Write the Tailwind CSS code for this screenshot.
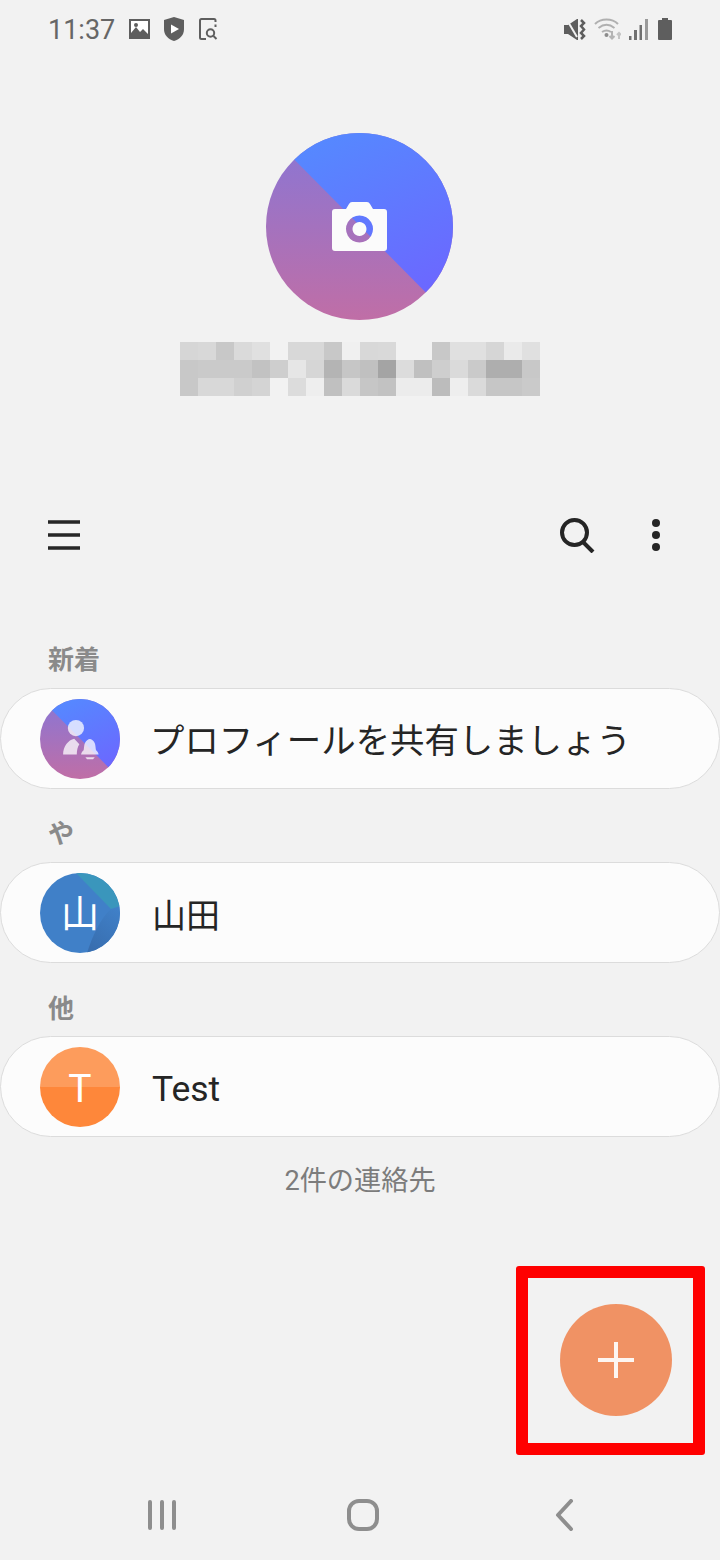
<!DOCTYPE html>
<html lang="ja">
<head>
  <meta charset="UTF-8" />
  <meta name="viewport" content="width=device-width, initial-scale=1.0"/>
  <title>連絡先</title>
  <script src="https://cdn.jsdelivr.net/npm/@tailwindcss/browser@4"></script>
</head>
<body class="bg-[#f2f2f2] text-[#252525] font-['Roboto','Noto_Sans_CJK_JP',sans-serif]">
  <div class="relative w-[720px] h-[1560px] flex flex-col overflow-hidden">

    <!-- status bar -->
    <div class="h-[60px] flex items-start justify-between pl-[48px] pr-[48px] pt-[17px]">
      <div class="flex items-center h-[24px]">
        <span class="w-[81px] mt-[2px] text-[27px] leading-[24px] text-[#666]">11:37</span>
        <svg width="21" height="20" viewBox="0 0 21 20"><path fill="#5e5e5e" d="M0 0h21v20H0z"/><path fill="#fff" d="M2 2h17v13l-5-5-3 3-4-5-5 6z"/><circle cx="7" cy="6" r="2" fill="#5e5e5e"/></svg>
        <svg class="ml-[14px]" width="20" height="24" viewBox="0 0 20 24"><path fill="#5e5e5e" d="M10 0l10 3v9c0 6-4 10-10 12C4 22 0 18 0 12V3z"/><path fill="#fff" d="M7 7.500l8 4.500-8 4.500z"/></svg>
        <svg class="ml-[15px]" width="19" height="22" viewBox="0 0 19 22" fill="none" stroke="#5e5e5e" stroke-width="2"><path d="M7 21H2.500A1.500 1.500 0 0 1 1 19.500v-17A1.500 1.500 0 0 1 2.500 1H15a1.500 1.500 0 0 1 1.500 1.500V4M16.500 6.500V9"/><circle cx="11.500" cy="15" r="3.700"/><path d="M14.500 18l3 3"/></svg>
      </div>
      <div class="flex items-center h-[24px]">
        <svg width="22" height="21" viewBox="0 0 22 21"><path fill="#5e5e5e" d="M0 6h4l9-6h1v21h-1l-9-6H0z"/><path stroke="#f2f2f2" stroke-width="2" d="M3 1l10 17"/><path fill="none" stroke="#5e5e5e" stroke-width="2.500" d="M17 1l3 3-3 3 3 3.500-3 3.500 3 3-3 3"/></svg>
        <svg class="ml-[8px]" width="27" height="22" viewBox="0 0 27 22" fill="none" stroke="#b0b0b0" stroke-width="2"><path d="M1 6c6-6 17-6 23 0M4.500 10c5-4 11-4 16 0M8 14c3-2 6-2 9 0"/><circle cx="12.500" cy="17" r="2" fill="#8c8c8c" stroke="none"/><path stroke="#b4b4b4" d="M18 13v7M15.500 18l2.500 2.500 2.500-2.500"/><path stroke="#c4c4c4" d="M25 21v-6M23 17l2-2 2 2"/></svg>
        <svg class="ml-[8px]" width="19" height="21" viewBox="0 0 19 21" fill="#707070"><path d="M0 17h2.500v4H0zM5 11h3v10H5zM10.500 6h2.500v15h-2.500z"/><path fill="#9a9a9a" d="M16 0h3v21h-3z"/></svg>
        <svg class="ml-[10px]" width="14" height="22" viewBox="0 0 14 22"><path fill="#5e5e5e" d="M4 0h6v2h3a1 1 0 0 1 1 1v18a1 1 0 0 1-1 1H1a1 1 0 0 1-1-1V3a1 1 0 0 1 1-1h3z"/></svg>
      </div>
    </div>

    <!-- profile -->
    <div class="flex flex-col items-center pt-[73px]">
      <svg class="self-start ml-[266px]" width="187" height="187" viewBox="0 0 187 187">
        <defs>
          <clipPath id="bigClip"><circle cx="93.500" cy="93.500" r="93.500"/></clipPath>
          <linearGradient id="bigBlue" x1="0.300" y1="0" x2="0.800" y2="1"><stop offset="0" stop-color="#5589ff"/><stop offset="1" stop-color="#6e64ff"/></linearGradient>
          <linearGradient id="bigPurple" x1="0" y1="0" x2="0" y2="1"><stop offset="0" stop-color="#8876d6"/><stop offset="1" stop-color="#c06ea6"/></linearGradient>
        </defs>
        <g clip-path="url(#bigClip)">
          <rect width="187" height="187" fill="url(#bigPurple)"/>
          <path d="M2 0H187V187Z" fill="url(#bigBlue)"/>
        </g>
        <path fill="#fbfbfb" fill-rule="evenodd" d="M69 76h11l3-5q1-2 3-2h15q2 0 3 2l3 5h11q3 0 3 3v36q0 3-3 3H69q-3 0-3-3V79q0-3 3-3zM93.500 82.500a13.500 13.500 0 1 0 0.010 0zM93.500 89a7 7 0 1 1-0.010 0z"/>
      </svg>
      <div class="mt-[22px] grid grid-cols-[repeat(20,18px)] auto-rows-[18px]">
        <div class="bg-[#d6d6d6]"></div><div class="bg-[#d8d8d8]"></div><div class="bg-[#c8c8c8]"></div><div class="bg-[#dadada]"></div><div class="bg-[#e0e0e0]"></div><div class="bg-[#f2f2f2]"></div><div class="bg-[#d8d8d8]"></div><div class="bg-[#d8d8d8]"></div><div class="bg-[#c8c8c8]"></div><div class="bg-[#f0f0f0]"></div><div class="bg-[#d8d8d8]"></div><div class="bg-[#d9d9d9]"></div><div class="bg-[#f2f2f2]"></div><div class="bg-[#f2f2f2]"></div><div class="bg-[#c8c8c8]"></div><div class="bg-[#e0e0e0]"></div><div class="bg-[#e0e0e0]"></div><div class="bg-[#d6d6d6]"></div><div class="bg-[#eaeaea]"></div><div class="bg-[#e0e0e0]"></div>
        <div class="bg-[#c8c8c8]"></div><div class="bg-[#cacaca]"></div><div class="bg-[#cacaca]"></div><div class="bg-[#cacaca]"></div><div class="bg-[#c2c2c2]"></div><div class="bg-[#cecece]"></div><div class="bg-[#e6e6e6]"></div><div class="bg-[#d6d6d6]"></div><div class="bg-[#b4b4b4]"></div><div class="bg-[#c6c6c6]"></div><div class="bg-[#c0c0c0]"></div><div class="bg-[#a4a4a4]"></div><div class="bg-[#dcdcdc]"></div><div class="bg-[#c0c0c0]"></div><div class="bg-[#cecece]"></div><div class="bg-[#dadada]"></div><div class="bg-[#cacaca]"></div><div class="bg-[#aeaeae]"></div><div class="bg-[#aeaeae]"></div><div class="bg-[#c8c8c8]"></div>
        <div class="bg-[#c8c8c8]"></div><div class="bg-[#d8d8d8]"></div><div class="bg-[#d8d8d8]"></div><div class="bg-[#d0d0d0]"></div><div class="bg-[#d4d4d4]"></div><div class="bg-[#f2f2f2]"></div><div class="bg-[#dcdcdc]"></div><div class="bg-[#eeeeee]"></div><div class="bg-[#c0c0c0]"></div><div class="bg-[#dadada]"></div><div class="bg-[#c6c6c6]"></div><div class="bg-[#c2c2c2]"></div><div class="bg-[#ececec]"></div><div class="bg-[#ececec]"></div><div class="bg-[#bcbcbc]"></div><div class="bg-[#eeeeee]"></div><div class="bg-[#dadada]"></div><div class="bg-[#c6c6c6]"></div><div class="bg-[#c6c6c6]"></div><div class="bg-[#cacaca]"></div>
      </div>
    </div>

    <!-- toolbar -->
    <div class="mt-[109px] h-[60px] flex items-center justify-between pl-[48px] pr-[60px]">
      <svg width="32" height="32" viewBox="0 0 32 32" fill="#252525"><path d="M0 1.250h32v3.500H0zM0 14.250h32v3.500H0zM0 27.250h32v3.500H0z"/></svg>
      <div class="flex items-center gap-[57px]">
        <svg width="36" height="36" viewBox="0 0 36 36" fill="none" stroke="#252525" stroke-width="4"><circle cx="15.500" cy="15.500" r="12.500"/><path d="M24 25l10 10"/></svg>
        <svg width="8" height="32" viewBox="0 0 8 32" fill="#252525"><circle cx="4" cy="4" r="4"/><circle cx="4" cy="16" r="4"/><circle cx="4" cy="28" r="4"/></svg>
      </div>
    </div>

    <!-- contacts -->
    <div class="mt-[50px] flex flex-col">
      <div class="h-[73px] pl-[48px] pt-[27px] text-[26px] leading-[36px] font-bold text-[#8a8a8a]">新着</div>
      <div class="h-[101px] rounded-full bg-[#fcfcfc] border border-[#dcdcdc] flex items-center pl-[39px] gap-[30px]">
        <svg width="80" height="80" viewBox="0 0 187 187">
          <defs>
            <clipPath id="smallClip"><circle cx="93.500" cy="93.500" r="93.500"/></clipPath>
            <linearGradient id="smallBlue" x1="0.300" y1="0" x2="0.800" y2="1"><stop offset="0" stop-color="#5589ff"/><stop offset="1" stop-color="#6e64ff"/></linearGradient>
            <linearGradient id="smallPurple" x1="0" y1="0" x2="0" y2="1"><stop offset="0" stop-color="#8876d6"/><stop offset="1" stop-color="#c06ea6"/></linearGradient>
          </defs>
          <g clip-path="url(#smallClip)">
            <rect width="187" height="187" fill="url(#smallPurple)"/>
            <path d="M2 0H187V187Z" fill="url(#smallBlue)"/>
          </g>
          <g fill="#fff" fill-opacity="0.75">
            <circle cx="84" cy="68" r="19"/>
            <path d="M54 130c0-19 12-34 26-37l12 13c-4 6-6 14-6 24z"/>
            <path d="M96 130c1-5 3-8 6-10 2-8 0-18 9-24 3-3 8-3 11 0 9 6 7 16 9 24 3 2 5 5 6 10z"/>
            <path d="M106 136h22l-4 5h-14z"/>
          </g>
        </svg>
        <span class="mt-[4px] text-[34.4px] leading-[48px]">プロフィールを共有しましょう</span>
      </div>

      <div class="h-[73px] pl-[48px] pt-[27px] text-[26px] leading-[36px] font-bold text-[#8a8a8a]">や</div>
      <div class="h-[101px] rounded-full bg-[#fcfcfc] border border-[#dcdcdc] flex items-center pl-[39px] gap-[32px]">
        <div class="relative w-[80px] h-[80px] rounded-full overflow-hidden bg-[#4080c8] flex items-center justify-center shrink-0">
          <svg class="absolute inset-0" width="80" height="80" viewBox="0 0 80 80">
            <defs><linearGradient id="yamaDark" x1="0.800" y1="0" x2="0.300" y2="1"><stop offset="0" stop-color="#4080c8"/><stop offset="1" stop-color="#386eaf"/></linearGradient></defs>
            <path d="M71 36L80 33V80H47C52 64 60 46 71 36Z" fill="url(#yamaDark)"/>
            <path d="M36 0H80V33L71 36Z" fill="#3a96bc"/>
          </svg>
          <span class="relative mt-[3px] text-[38px] leading-[38px] text-white">山</span>
        </div>
        <span class="mt-[6px] text-[34px] leading-[48px]">山田</span>
      </div>

      <div class="h-[73px] pl-[48px] pt-[28px] text-[26px] leading-[36px] font-bold text-[#8a8a8a]">他</div>
      <div class="h-[101px] rounded-full bg-[#fcfcfc] border border-[#dcdcdc] flex items-center pl-[39px] gap-[32px]">
        <div class="w-[80px] h-[80px] rounded-full overflow-hidden bg-[linear-gradient(#fd9c5c_50%,#fe873a_50%)] flex items-center justify-center shrink-0">
          <span class="mt-[4px] text-[39px] leading-[40px] text-white">T</span>
        </div>
        <span class="mt-[4px] text-[35.5px] leading-[48px]">Test</span>
      </div>
    </div>

    <div class="mt-[26px] text-center text-[27.2px] leading-[36px] text-[#7c7c7c]">2件の連絡先</div>

    <!-- nav bar -->
    <div class="mt-auto h-[80px] pb-[10px] flex items-center pl-[146px]">
      <svg width="32" height="32" viewBox="0 0 32 32" stroke="#8e8e8e" stroke-width="4" stroke-linecap="round"><path d="M4 3v26M16 3v26M28 3v26"/></svg>
      <svg class="ml-[169px]" width="32" height="32" viewBox="0 0 32 32" fill="none" stroke="#8e8e8e" stroke-width="4"><rect x="2" y="2" width="28" height="28" rx="10"/></svg>
      <svg class="ml-[176px]" width="20" height="32" viewBox="0 0 20 32" fill="none" stroke="#8e8e8e" stroke-width="4" stroke-linecap="round" stroke-linejoin="round"><path d="M16 2L3 16l13 14"/></svg>
    </div>

    <!-- add button + annotation frame -->
    <button class="absolute left-[560px] top-[1304px] w-[112px] h-[112px] rounded-full bg-[#f09264] flex items-center justify-center">
      <svg width="36" height="36" viewBox="0 0 36 36" fill="#fdf6f2"><path d="M16 0h4v36h-4zM0 16h36v4H0z"/></svg>
    </button>
    <div class="absolute left-[516px] top-[1266px] w-[189px] h-[189px] border-[12px] border-[#ff0000] rounded-[3px]"></div>
  </div>
</body>
</html>
